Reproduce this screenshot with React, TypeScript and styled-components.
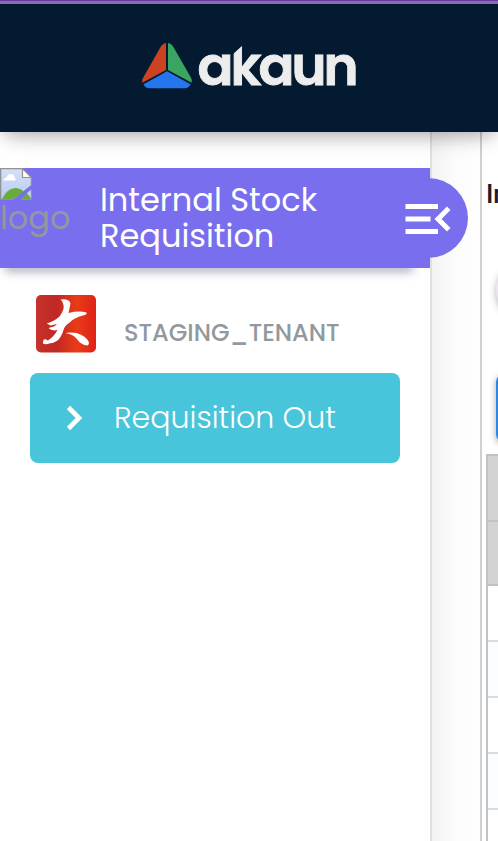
import React from "react";
import styled, { createGlobalStyle } from "styled-components";

const GlobalStyle = createGlobalStyle`
  * { box-sizing: border-box; }
  html, body { margin: 0; overflow: hidden; background: #fff; }
  body { font-family: "Poppins", "Inter", sans-serif; }
  svg { display: block; flex: none; }
`;

const Page = styled.div`
  width: 498px;
  height: 841px;
  display: flex;
  flex-direction: column;
  overflow: hidden;
`;

const Header = styled.header`
  flex: none;
  height: 132px;
  padding: 38px 0 0 142px;
  background: #041a30;
  border-top: 4px solid #8c6bb5;
  box-shadow: 0 12px 24px -8px rgba(0, 0, 0, 0.14), 0 4px 18px -3px rgba(0, 0, 0, 0.28);
  position: relative;
  z-index: 3;
  &::before {
    content: "";
    position: absolute;
    top: -4px;
    left: 0;
    right: 0;
    height: 1px;
    background: #693b9c;
  }
`;

const Body = styled.div`
  flex: 1;
  display: flex;
  min-height: 0;
`;

const Sidebar = styled.aside`
  flex: none;
  width: 432px;
  padding-top: 36px;
  border-right: 2px solid #e0e0e0;
  background: #fff;
  position: relative;
  z-index: 2;
`;

const AppBanner = styled.div`
  position: relative;
  z-index: 4;
  height: 100px;
  display: flex;
  background: #796eee;
`;

const BannerShade = styled.div`
  height: 0;
  margin: 0 20px 0 8px;
  box-shadow: 0 0 10px 3px rgba(40, 55, 90, 0.55);
`;

const BrokenLogo = styled.div`
  width: 100px;
  color: #9298a0;
  font-size: 32px;
  line-height: 36px;
`;

const AppTitle = styled.h1`
  margin: 14px 0 0;
  width: 260px;
  color: #fff;
  font-size: 32px;
  font-weight: 400;
  line-height: 36px;
`;

const CollapseButton = styled.button`
  position: absolute;
  right: -38px;
  top: 10px;
  width: 80px;
  height: 80px;
  padding: 11px 10px;
  border: 0;
  border-radius: 50%;
  background: #796eee;
`;

const Tenant = styled.div`
  display: flex;
  height: 105px;
  padding: 26px 0 0 36px;
  gap: 28px;
`;

const TenantName = styled.span`
  margin-top: 21px;
  color: #91999e;
  font-size: 24px;
  font-weight: 500;
  line-height: 36px;
`;

const MenuItem = styled.a`
  display: flex;
  align-items: center;
  gap: 14px;
  width: 370px;
  height: 90px;
  margin-left: 30px;
  padding-left: 14px;
  border-radius: 8px;
  background: #49c5db;
  color: #fff;
  font-size: 30px;
  font-weight: 300;
  white-space: nowrap;
`;

const Gutter = styled.div`
  flex: none;
  width: 48px;
  background: linear-gradient(to right, #f3f3f3, #fcfcfc 50%, #fff);
`;

const Content = styled.main`
  flex: none;
  width: 240px;
  padding: 44px 0 0 4px;
  border-left: 2px solid #d0d0d0;
  background: #fff;
`;

const ContentTitle = styled.h2`
  margin: 0;
  height: 84px;
  color: #221a2c;
  font: 500 26px/36px Roboto, sans-serif;
`;

const RoundButton = styled.div`
  width: 60px;
  height: 60px;
  margin-left: 10px;
  border-radius: 50%;
  background: #ece6f3;
  box-shadow: 0 2px 7px rgba(0, 0, 0, 0.3);
`;

const ActionButton = styled.div`
  width: 140px;
  height: 68px;
  margin: 54px 0 12px 10px;
  border-radius: 8px;
  background: #2f87df;
  box-shadow: 0 2px 7px rgba(0, 0, 0, 0.35);
`;

const Table = styled.div`
  width: 220px;
  border: solid #bdc3c7;
  border-width: 2px 0 0 2px;
`;

const HeadRow = styled.div<{ $height: number }>`
  height: ${(p) => p.$height}px;
  background: #d3d3d3;
  border-bottom: 2px solid #bdc3c7;
`;

const Row = styled.div<{ $tinted: boolean }>`
  height: 56px;
  background: ${(p) => (p.$tinted ? "#fcfdfe" : "#fff")};
  border-bottom: 2px solid #d9dcde;
`;

function Brand() {
  return (
    <svg width="230" height="50" viewBox="0 0 230 50">
      <path d="M24 1v27L.4 40.700Q-.3 38 1 36L18 6q2.300-4.600 6-5z" fill="#ce4224" />
      <path d="M26 1v27l23.700 12.700q.7-2.500-.7-5L32 6q-2.300-4.600-6-5z" fill="#3aa560" />
      <path d="M25 29.200 48.500 42.200q-1.500 4-6 4h-35q-4.500 0-6-4z" fill="#2575ef" />
      <text
        x="55.500"
        y="42.700"
        textLength="161"
        lengthAdjust="spacing"
        fill="#ededed"
        stroke="#ededed"
        strokeWidth="0.9"
        fontFamily="Poppins, Inter, sans-serif"
        fontSize="53"
        fontWeight="600"
      >
        akaun
      </text>
      <path d="M90 0h11.500v2.500L90 13z" fill="#041a30" />
    </svg>
  );
}

function BrokenImage() {
  return (
    <svg width="32" height="32" viewBox="0 0 32 32">
      <defs>
        <linearGradient id="sky" x1="0" y1="0" x2="0" y2="1">
          <stop offset="0" stopColor="#d3e0f8" />
          <stop offset="1" stopColor="#b9ccf0" />
        </linearGradient>
      </defs>
      <path d="M.7.7H22L31.300 9.500V17L13 31.300H.7z" fill="url(#sky)" />
      <path d="M2 31q5-10.500 13-11 5 0 9 3.500L13 31z" fill="#68ac3c" />
      <path d="M21 31l6-6 4 6z" fill="#68ac3c" />
      <path d="M27 25l4.300-3.500V31z" fill="#c6d8f7" />
      <path d="M3.500 12.500q0-3 3-3 1-3.500 4.300-3.500 3.700 0 3.700 3.500 2 .8 1 3z" fill="#fff" />
      <path d="M22.500 1v8.500H31z" fill="#fff" />
      <path
        d="M13 31.300H.7V.7H22.500L31.300 9.500V17M22.500 .7v8.800h8.800M21 31.300h10.300v-9.500"
        fill="none"
        stroke="#929292"
        strokeWidth="1.200"
      />
    </svg>
  );
}

function TenantMark() {
  return (
    <svg width="60" height="59" viewBox="0 0 60 59">
      <defs>
        <linearGradient id="red" x1="0" x2="1" y1="0" y2="0">
          <stop offset="0" stopColor="#c7322c" />
          <stop offset=".33" stopColor="#bf2824" />
          <stop offset=".68" stopColor="#e93b18" />
          <stop offset="1" stopColor="#df2318" />
        </linearGradient>
      </defs>
      <rect y="1" width="60" height="57.500" rx="5" fill="url(#red)" />
      <path
        d="M24.700 5.500Q33 4.500 34.500 9.500L32.500 19Q43 16.500 50.500 18.500 51.500 20.500 47 21.500 38 23.500 33 29 28.500 32 27.500 36 25.500 43 21.500 46.500 17.500 49.300 14 49.300 9.500 51 7 49.500 6.500 46 9 45L12 46.500Q18 42.500 21.500 36 15.500 37.500 12.500 34L18.500 32.300 21 30 14.500 31.500 10.700 29.500Q18 27.500 23.500 22.500 28.500 16 27.500 11 27 8 24.700 5.500z"
        fill="#fff"
      />
      <path d="M29 39q10-1.500 16.500 2 5.500 3 7.300 7 .5 3-1 3.500-4 0-8-3-3-4-6-6.500-4-2.500-8.800-3z" fill="#fff" />
    </svg>
  );
}

export default function App() {
  return (
    <Page>
      <GlobalStyle />
      <Header>
        <Brand />
      </Header>
      <Body>
        <Sidebar>
          <AppBanner>
            <BrokenLogo>
              <BrokenImage />
              logo
            </BrokenLogo>
            <AppTitle>Internal Stock Requisition</AppTitle>
            <CollapseButton aria-label="Collapse menu">
              <svg width="60" height="60" viewBox="0 0 24 24" fill="#fff">
                <path d="M3 18h13v-2H3v2zm0-5h10v-2H3v2zm0-7v2h13V6H3zm18 9.590L17.420 12 21 8.410 19.590 7l-5 5 5 5L21 15.590z" />
              </svg>
            </CollapseButton>
          </AppBanner>
          <BannerShade />
          <Tenant>
            <TenantMark />
            <TenantName>STAGING_TENANT</TenantName>
          </Tenant>
          <MenuItem>
            <svg width="56" height="60" viewBox="0 0 56 60">
              <path d="M24.500 19.500 35 30 24.500 40.500" fill="none" stroke="#fff" strokeWidth="4.600" />
            </svg>
            Requisition Out
          </MenuItem>
        </Sidebar>
        <Gutter />
        <Content>
          <ContentTitle>Internal</ContentTitle>
          <RoundButton />
          <ActionButton />
          <Table>
            <HeadRow $height={66} />
            <HeadRow $height={64} />
            {[false, true, false, true, false].map((tinted, i) => (
              <Row key={i} $tinted={tinted} />
            ))}
          </Table>
        </Content>
      </Body>
    </Page>
  );
}
